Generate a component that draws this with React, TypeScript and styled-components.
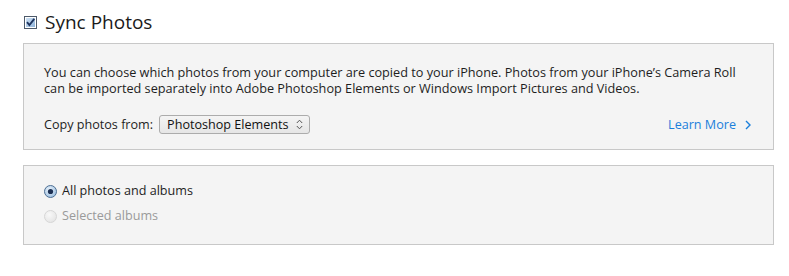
import React from 'react'
import styled, { createGlobalStyle } from 'styled-components'

const GlobalStyle = createGlobalStyle`
  body {
    margin: 0;
    background: #ffffff;
    font-family: "Open Sans", "Noto Sans", sans-serif;
    color: #1e1e1e;
  }
`

const Page = styled.div`
  width: 789px;
  height: 276px;
  padding: 11px 0 0 23px;
  box-sizing: border-box;
`

const Header = styled.label`
  display: flex;
  align-items: center;
  gap: 8px;
  height: 22px;
  margin-left: 1px;
  font-size: 19px;
  color: #1a1a1a;
`

const Panel = styled.div<{ $pad: string; $top: number }>`
  width: 751px;
  box-sizing: border-box;
  margin-top: ${(p) => p.$top}px;
  background: #f4f4f4;
  border: 1px solid #c8c8c8;
  padding: ${(p) => p.$pad};
`

const Description = styled.p`
  margin: 0;
  font-size: 12.7px;
  line-height: 16px;
  color: #1e1e1e;
`

const CopyRow = styled.div`
  display: flex;
  align-items: center;
  margin-top: 19px;
  font-size: 12.6px;
`

const SelectBox = styled.div`
  display: flex;
  align-items: center;
  gap: 7px;
  height: 19px;
  box-sizing: border-box;
  margin-left: 6px;
  padding: 0 6px 0 7px;
  border: 1px solid #acacac;
  border-radius: 3px;
  background: linear-gradient(#f4f4f4, #e6e6e6);
  color: #111;
`

const LearnMore = styled.a`
  margin-left: auto;
  margin-right: 2px;
  display: flex;
  align-items: center;
  gap: 9px;
  color: #1b7fdb;
  text-decoration: none;
`

const Options = styled.div`
  display: flex;
  flex-direction: column;
  gap: 9px;
`

const Option = styled.label<{ $disabled?: boolean }>`
  display: flex;
  align-items: center;
  gap: 5px;
  font-size: 12.6px;
  line-height: 16px;
  color: ${(p) => (p.$disabled ? '#9a9a9a' : '#1e1e1e')};
`

function CheckIcon() {
  return (
    <svg width="13" height="13" viewBox="0 0 13 13">
      <defs>
        <linearGradient id="cb" x1="0" y1="0" x2="1" y2="1">
          <stop offset="0" stopColor="#cfe2f5" />
          <stop offset="1" stopColor="#8fb4da" />
        </linearGradient>
      </defs>
      <rect x="0.5" y="0.5" width="12" height="12" fill="#fff" stroke="#4d5a6a" />
      <rect x="2" y="2" width="9" height="9" fill="url(#cb)" />
      <path d="M3 6.2 L5.4 9 L10.3 2.8" fill="none" stroke="#1f3560" strokeWidth="1.9" />
    </svg>
  )
}

function Updown() {
  return (
    <svg width="7" height="11" viewBox="0 0 7 11">
      <path d="M0.8 4 L3.5 1.2 L6.2 4 M0.8 7 L3.5 9.8 L6.2 7" fill="none" stroke="#555" strokeWidth="1" />
    </svg>
  )
}

function Chevron() {
  return (
    <svg width="6" height="10" viewBox="0 0 6 10">
      <path d="M1 1 L5 5 L1 9" fill="none" stroke="#1b7fdb" strokeWidth="1.4" />
    </svg>
  )
}

function Radio({ checked, disabled }: { checked?: boolean; disabled?: boolean }) {
  const id = checked ? 'ron' : 'roff'
  return (
    <svg width="13" height="13" viewBox="0 0 13 13">
      <defs>
        <radialGradient id={id} cx="0.4" cy="0.35" r="0.7">
          <stop offset="0" stopColor={disabled ? '#f8f8f8' : '#e8f2fb'} />
          <stop offset="1" stopColor={disabled ? '#e4e4e4' : '#9cbedf'} />
        </radialGradient>
      </defs>
      <circle cx="6.5" cy="6.5" r="6" fill={`url(#${id})`} stroke={disabled ? '#d6d6d6' : '#4f6f93'} />
      {checked && <circle cx="6.5" cy="6.5" r="2.6" fill="#1c2f52" />}
    </svg>
  )
}

export default function App() {
  return (
    <Page>
      <GlobalStyle />
      <Header>
        <CheckIcon />
        Sync Photos
      </Header>
      <Panel $pad="20px 20px 15px 20px" $top={10}>
        <Description>
          You can choose which photos from your computer are copied to your iPhone. Photos from your iPhone’s Camera Roll
          <br />
          can be imported separately into Adobe Photoshop Elements or Windows Import Pictures and Videos.
        </Description>
        <CopyRow>
          Copy photos from:
          <SelectBox>
            Photoshop Elements
            <Updown />
          </SelectBox>
          <LearnMore href="#">
            Learn More
            <Chevron />
          </LearnMore>
        </CopyRow>
      </Panel>
      <Panel $pad="17px 20px 20px 20px" $top={15}>
        <Options>
          <Option>
            <Radio checked />
            All photos and albums
          </Option>
          <Option $disabled>
            <Radio disabled />
            Selected albums
          </Option>
        </Options>
      </Panel>
    </Page>
  )
}
